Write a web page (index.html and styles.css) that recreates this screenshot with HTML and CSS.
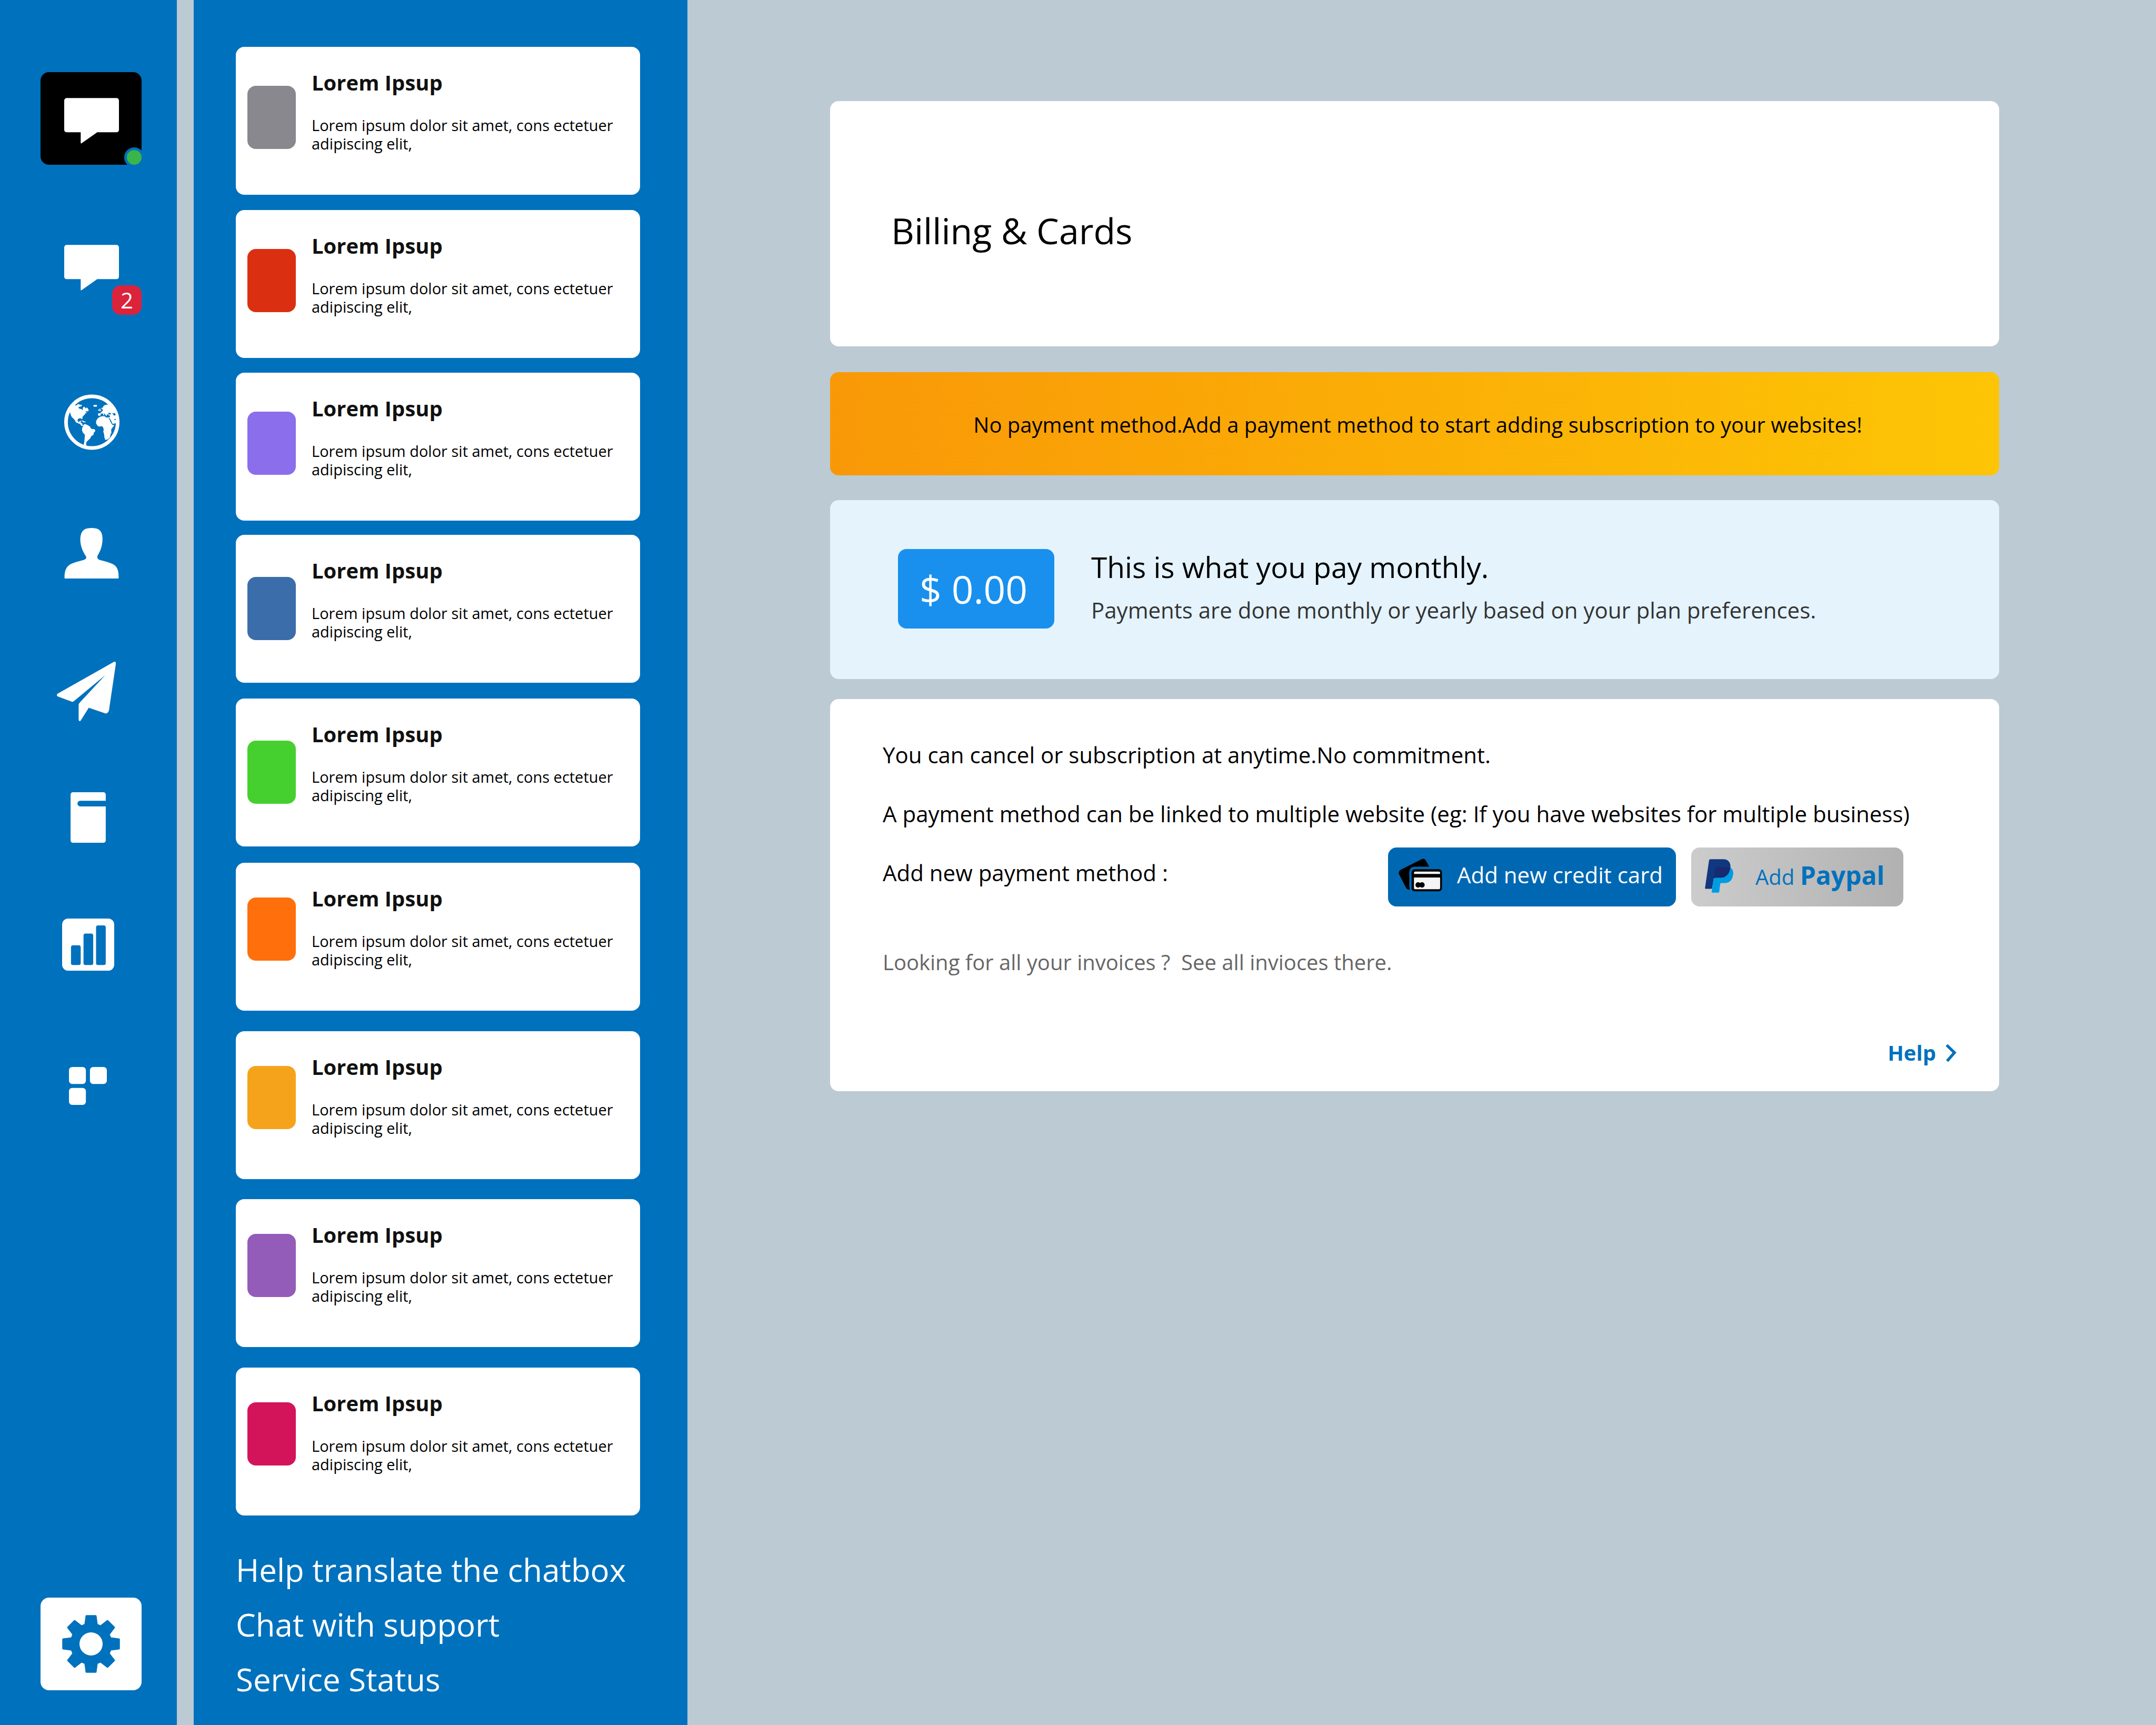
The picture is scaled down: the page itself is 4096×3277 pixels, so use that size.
FILE: index.html
```html
<!DOCTYPE html>
<html lang="en">
<head>
<meta charset="utf-8">
<title>Billing &amp; Cards</title>
<link rel="stylesheet" href="styles.css">
</head>
<body>
<div class="app">
  <aside class="rail">
    <nav class="rail-nav" aria-label="Main">
      <a class="tile tile-dark" href="#home" aria-label="Chatbox">
        <svg width="104" height="87" viewBox="0 0 136 113"><path fill="#fff" d="M6 0H130a6 6 0 0 1 6 6V79a6 6 0 0 1-6 6H82L43 112.500q-2 1-2-1V85H6a6 6 0 0 1-6-6V6a6 6 0 0 1 6-6z"/></svg>
        <span class="status"></span>
      </a>
      <a class="rail-link" href="#chats" aria-label="Chats, 2 unread">
        <svg width="104" height="87" viewBox="0 0 136 113"><path fill="#fff" d="M6 0H130a6 6 0 0 1 6 6V79a6 6 0 0 1-6 6H82L43 112.500q-2 1-2-1V85H6a6 6 0 0 1-6-6V6a6 6 0 0 1 6-6z"/></svg>
        <span class="count">2</span>
      </a>
      <a class="rail-link" href="#visitors" aria-label="Visitors">
        <svg width="105" height="106" viewBox="26 15 411 413">
          <circle cx="231.500" cy="221.500" r="192" fill="none" stroke="#fff" stroke-width="27"/>
          <g fill="#fff">
            <path d="M100 92L113 97L122 94L127 86L138 88L144 93L156 91L157 98L152 105L144 103L147 107L134 108L132 114L138 121L156 125L160 131L165 128L163 119L168 114L166 109L173 108L182 112L185 120L195 112L203 122L209 136L195 142L187 140L184 146L193 150L193 154L184 155L178 165L166 177L160 184L163 194L158 200L152 193L137 193L128 198L125 208L128 218L139 219L144 211L151 212L148 225L160 231L161 240L168 246L171 239L181 235L193 240L207 247L219 256L223 267L235 273L248 272L257 280L255 292L246 299L243 316L227 325L220 341L206 355L193 367L188 380L192 393L170 395L176 362L180 314L168 304L158 283L160 263L166 254L165 248L153 249L147 238L135 231L122 227L111 221L106 208L96 196L83 184L75 169L69 148L62 150L70 120z"/>
            <path d="M248 93H265Q270 93 270 97V102Q270 105 265 106H247Q242 105 243 100Q244 94 248 93z"/>
            <path d="M150 214L160 209L170 213L176 218L165 218L158 214zM166 218L178 217L186 219L185 222L164 222z"/>
            <path d="M287 123L294 119L296 132L302 136L296 139L285 138L290 133zM278 129L285 126L286 135L278 136z"/>
            <path d="M350 90L330 93L316 103L315 113L302 115L304 125L316 129L307 143L299 148L294 156L279 155L277 167L280 174H293L298 168L298 159L311 156L319 172L325 169L318 157L327 159L337 174L343 175L342 165L352 164L359 172H366V182L359 186H338L326 177L313 176L294 180L276 192L263 213L263 231L275 250L288 255L305 251L314 258L317 266L320 280L316 291L322 308L324 330L331 354L350 350L366 335L371 309L377 302L375 276L384 264L396 248V241L385 243L372 222L357 190L362 190L374 209L386 235L409 229L417 180L391 114z"/>
          </g>
          <path fill="#0071bd" d="M353 154L362 152L375 158L374 164H358L354 160zM386 154L396 157L400 150L404 159L409 162L405 173L391 170L392 164L385 162zM398 200L406 197L411 201L406 207L399 205z"/>
        </svg>
      </a>
      <a class="rail-link" href="#contacts" aria-label="Contacts">
        <svg width="104" height="96" viewBox="159 0 134 125"><path fill="#fff" d="M226 0C243 0 253 5 253 28C253 46 246 60 241 68C238 76 244 79 250 80C263 83 277 87 284 93C291 99 293 109 293 122Q293 125 292 125H160Q159 125 159 122C159 109 162 99 169 93C176 87 190 83 203 80C209 79 215 76 212 70C206 61 198 46 198 28C199 5 209 0 226 0z"/></svg>
      </a>
      <a class="rail-link campaigns" href="#campaigns" aria-label="Campaigns">
        <svg width="112" height="113" viewBox="140 0 146 147"><path fill="#fff" d="M282 0Q287-1 286 6L269 121Q266 129 260 128L219 114L199 146Q195 149 194 144V107Q194 104 197 101L260 33L183 97Q180 100 177 99L142 86Q138 82 142 79z"/></svg>
      </a>
      <a class="rail-link shift-left" href="#articles" aria-label="Articles">
        <svg width="67" height="96" viewBox="0 0 87 125"><path fill="#fff" d="M6 0H81a6 6 0 0 1 6 6V21H24a6.500 6.500 0 0 0 0 14H87V119a6 6 0 0 1-6 6H6a6 6 0 0 1-6-6V6a6 6 0 0 1 6-6z"/></svg>
      </a>
      <a class="rail-link shift-left" href="#reports" aria-label="Reports">
        <svg width="99" height="99" viewBox="0 0 129 129"><rect width="129" height="129" rx="15" fill="#fff"/><g fill="#0071bd"><rect x="22" y="66" width="24" height="49" rx="5"/><rect x="53" y="37" width="24" height="78" rx="5"/><rect x="84" y="17" width="24" height="98" rx="5"/></g></svg>
      </a>
      <a class="rail-link shift-left" href="#apps" aria-label="Apps">
        <svg width="72" height="72" viewBox="0 0 94 94"><g fill="#fff"><rect width="42" height="42" rx="8"/><rect x="52" width="42" height="42" rx="8"/><rect y="52" width="42" height="42" rx="8"/></g></svg>
      </a>
    </nav>
    <a class="tile tile-light" href="#settings" aria-label="Settings">
      <svg width="110" height="110" viewBox="-215 -215 430 430">
        <g fill="#0071bd">
          <circle r="156"/>
          <g id="teeth"><path id="tooth" d="M-50-140L-41-208Q-40-214-34-214H34Q40-214 41-208L50-140z"/><use href="#tooth" transform="rotate(45)"/><use href="#tooth" transform="rotate(90)"/><use href="#tooth" transform="rotate(135)"/></g>
          <use href="#teeth" transform="rotate(180)"/>
        </g>
        <circle r="86" fill="#fff"/>
      </svg>
    </a>
  </aside>

  <section class="panel">
    <ul class="threads">
      <li class="thread"><span class="swatch gray"></span><div><h2>Lorem Ipsup</h2><p>Lorem ipsum dolor sit amet, cons ectetuer adipiscing elit,</p></div></li>
      <li class="thread"><span class="swatch red"></span><div><h2>Lorem Ipsup</h2><p>Lorem ipsum dolor sit amet, cons ectetuer adipiscing elit,</p></div></li>
      <li class="thread"><span class="swatch violet"></span><div><h2>Lorem Ipsup</h2><p>Lorem ipsum dolor sit amet, cons ectetuer adipiscing elit,</p></div></li>
      <li class="thread"><span class="swatch low blue"></span><div><h2>Lorem Ipsup</h2><p>Lorem ipsum dolor sit amet, cons ectetuer adipiscing elit,</p></div></li>
      <li class="thread"><span class="swatch low green"></span><div><h2>Lorem Ipsup</h2><p>Lorem ipsum dolor sit amet, cons ectetuer adipiscing elit,</p></div></li>
      <li class="thread"><span class="swatch high orange"></span><div><h2>Lorem Ipsup</h2><p>Lorem ipsum dolor sit amet, cons ectetuer adipiscing elit,</p></div></li>
      <li class="thread"><span class="swatch high amber"></span><div><h2>Lorem Ipsup</h2><p>Lorem ipsum dolor sit amet, cons ectetuer adipiscing elit,</p></div></li>
      <li class="thread"><span class="swatch high purple"></span><div><h2>Lorem Ipsup</h2><p>Lorem ipsum dolor sit amet, cons ectetuer adipiscing elit,</p></div></li>
      <li class="thread"><span class="swatch high pink"></span><div><h2>Lorem Ipsup</h2><p>Lorem ipsum dolor sit amet, cons ectetuer adipiscing elit,</p></div></li>
    </ul>
    <nav class="support" aria-label="Support">
      <a href="#translate">Help translate the chatbox</a>
      <a href="#support">Chat with support</a>
      <a href="#status">Service Status</a>
    </nav>
  </section>

  <main class="main">
    <header class="card title-card"><h1>Billing &amp; Cards</h1></header>
    <p class="card banner">No payment method.Add a payment method to start adding subscription to your websites!</p>
    <section class="card plan">
      <span class="amount">$ 0.00</span>
      <div class="plan-text">
        <h2>This is what you pay monthly.</h2>
        <p>Payments are done monthly or yearly based on your plan preferences.</p>
      </div>
    </section>
    <section class="card methods">
      <p>You can cancel or subscription at anytime.No commitment.</p>
      <p>A payment method can be linked to multiple website (eg: If you have websites for multiple business)</p>
      <div class="add-row">
        <span class="add-label">Add new payment method :</span>
        <button class="btn btn-card" type="button">
          <svg width="83" height="63" viewBox="88 60 326 246">
            <path d="M108 141L262 63Q280 57 290 71L317 120H208Q170 122 168 160V270L172 291Q152 292 143 276L91 175Q85 153 108 141z"/>
            <rect x="185" y="139" width="227" height="165" rx="24"/>
            <path fill="#f5f5f5" d="M203 174V166Q203 156 213 156H388Q398 156 398 166V174zM203 201H398V278Q398 288 388 288H213Q203 288 203 278z"/>
            <circle cx="234" cy="256" r="20"/><circle cx="263" cy="256" r="20"/>
          </svg>
          Add new credit card
        </button>
        <button class="btn btn-paypal" type="button">
          <svg width="54" height="64" viewBox="112 74 212 250">
            <path fill="#103780" d="M153 74H250C286 74 304 98 303 134L250 240L178 220L165 295H118Q112 295 113 289L143 82Q144 74 153 74z"/>
            <path fill="#009ce3" d="M301 137C318 145 325 163 323 184C320 220 302 251 262 252H235Q227 252 226 260L219 317Q218 324 212 324H168Q162 324 163 317L177 222Q178 212 188 212H238C272 208 298 178 301 137z"/>
            <path fill="#172b70" d="M197 133H283Q295 133 302 137C298 182 272 212 228 212H188Q180 213 178 220L190 140Q191 133 197 133z"/>
          </svg>
          <span>Add <b>Paypal</b></span>
        </button>
      </div>
      <p class="invoices">Looking for all your invoices ?&nbsp; See all invioces there.</p>
      <a class="help" href="#help">Help
        <svg width="21" height="35" viewBox="0 0 27 45"><path fill="none" stroke="#0071bd" stroke-width="7" d="M3 3L22 21.500L4 42"/></svg>
      </a>
    </section>
  </main>
</div>
</body>
</html>
```
FILE: styles.css
```css
* {
  box-sizing: border-box;
}

body,
h1,
h2,
p,
ul {
  margin: 0;
  padding: 0;
}

body {
  background: #bbcad3;
  color: #000;
  font-family: "Open Sans", "Noto Sans", sans-serif;
  font-size: 42px;
}

a {
  color: inherit;
  text-decoration: none;
}

svg {
  display: block;
  flex: none;
}

.app {
  display: grid;
  grid-template-columns: 368px 938px minmax(0, 1fr);
  min-height: 100vh;
}

/* Icon rail */
.rail {
  display: flex;
  flex-direction: column;
  justify-content: space-between;
  margin-right: 32px;
  padding: 137px 67px 66px 77px;
  background: #0071bd;
}

.rail-nav {
  display: grid;
  grid-template-rows: 328px 284px 254px 254px 248px 240px 282px 72px;
  align-items: start;
}

.tile {
  position: relative;
  display: flex;
  align-items: center;
  justify-content: center;
  height: 176px;
  border-radius: 16px;
}

.tile-dark {
  padding: 8px 0 0 2px;
  background: #000;
}

.tile-light {
  background: #fff;
}

.status {
  position: absolute;
  right: -5px;
  bottom: -5px;
  width: 38px;
  height: 38px;
  border: 5px solid #0071bd;
  border-radius: 50%;
  background: #39b54a;
}

.rail-link {
  position: relative;
  display: flex;
  justify-content: center;
  padding-left: 2px;
}

.shift-left {
  padding: 0 12px 0 0;
}

.campaigns {
  padding: 0 18px 0 0;
}

.count {
  position: absolute;
  top: 77px;
  right: 0;
  width: 56px;
  height: 56px;
  border-radius: 16px;
  background: #db233b;
  color: #fff;
  line-height: 56px;
  text-align: center;
}

/* Thread panel */
.panel {
  padding: 89px 90px 0 80px;
  background: #0071bd;
}

.threads {
  display: grid;
  grid-template-rows: 310px 309px 308px 311px 312px 320px 319px 320px 281px;
  align-items: start;
  list-style: none;
}

.thread {
  display: flex;
  gap: 30px;
  height: 281px;
  padding: 0 22px;
  border-radius: 16px;
  background: #fff;
}

.swatch {
  flex: none;
  width: 92px;
  height: 120px;
  margin-top: 74px;
  border-radius: 16px;
}

.low {
  margin-top: 80px;
}

.high {
  margin-top: 66px;
}

.gray { background: #89888e; }
.red { background: #db2f12; }
.violet { background: #8b6eeb; }
.blue { background: #3a6da9; }
.green { background: #46d02f; }
.orange { background: #ff6f0c; }
.amber { background: #f6a31c; }
.purple { background: #945cb9; }
.pink { background: #d4145a; }

.thread h2 {
  margin-top: 40px;
  color: #111;
  font-size: 40px;
  line-height: 56px;
}

.thread p {
  margin-top: 35px;
  font-size: 29px;
  line-height: 35px;
}

.support {
  display: flex;
  flex-direction: column;
  margin-top: 51px;
  color: #fff;
  font-size: 60px;
  line-height: 104px;
}

/* Billing content */
.main {
  display: flex;
  flex-direction: column;
  padding: 192px 298px 192px 271px;
}

.card {
  border-radius: 16px;
  background: #fff;
}

.title-card {
  padding: 198px 116px 172px;
}

h1 {
  font-size: 68px;
  font-weight: 400;
  line-height: 96px;
}

.banner {
  margin-top: 49px;
  padding: 68px 0 64px 12px;
  background: linear-gradient(90deg, #f99807, #fdc505);
  font-size: 40px;
  line-height: 64px;
  text-align: center;
}

.plan {
  display: flex;
  align-items: center;
  gap: 70px;
  margin-top: 47px;
  padding: 86px 129px 90px;
  background: #e4f3fc;
}

.amount {
  flex: none;
  width: 297px;
  padding-right: 10px;
  border-radius: 16px;
  background: #1990ee;
  color: #fff;
  font-size: 73px;
  line-height: 151px;
  text-align: center;
}

.plan h2 {
  font-size: 55px;
  font-weight: 400;
  line-height: 82px;
}

.plan p {
  color: #333;
  line-height: 82px;
}

.methods {
  display: flex;
  flex-direction: column;
  margin-top: 38px;
  padding: 50px 81px 41px 100px;
  line-height: 112px;
}

.add-row {
  display: flex;
  gap: 29px;
  margin-top: 8px;
  padding-right: 101px;
}

.add-label {
  flex: 1;
  line-height: 96px;
}

.btn {
  display: flex;
  align-items: center;
  height: 112px;
  border: 0;
  border-radius: 16px;
  font: inherit;
  white-space: nowrap;
}

.btn-card {
  gap: 28px;
  width: 547px;
  padding: 0 20px 8px;
  background: #0068b3;
  color: #fff;
}

.btn-paypal {
  gap: 42px;
  width: 403px;
  padding: 0 26px 4px;
  background: linear-gradient(90deg, #ccc, #b1b1b1);
  color: #0071bd;
  font-size: 40px;
}

.btn b {
  font-size: 48px;
  font-weight: 700;
}

.invoices {
  margin-top: 50px;
  color: #666;
  font-size: 40px;
}

.help {
  display: flex;
  align-items: center;
  align-self: flex-end;
  gap: 18px;
  margin-top: 84px;
  color: #0071bd;
  font-size: 40px;
  font-weight: 700;
  line-height: 64px;
}
```
